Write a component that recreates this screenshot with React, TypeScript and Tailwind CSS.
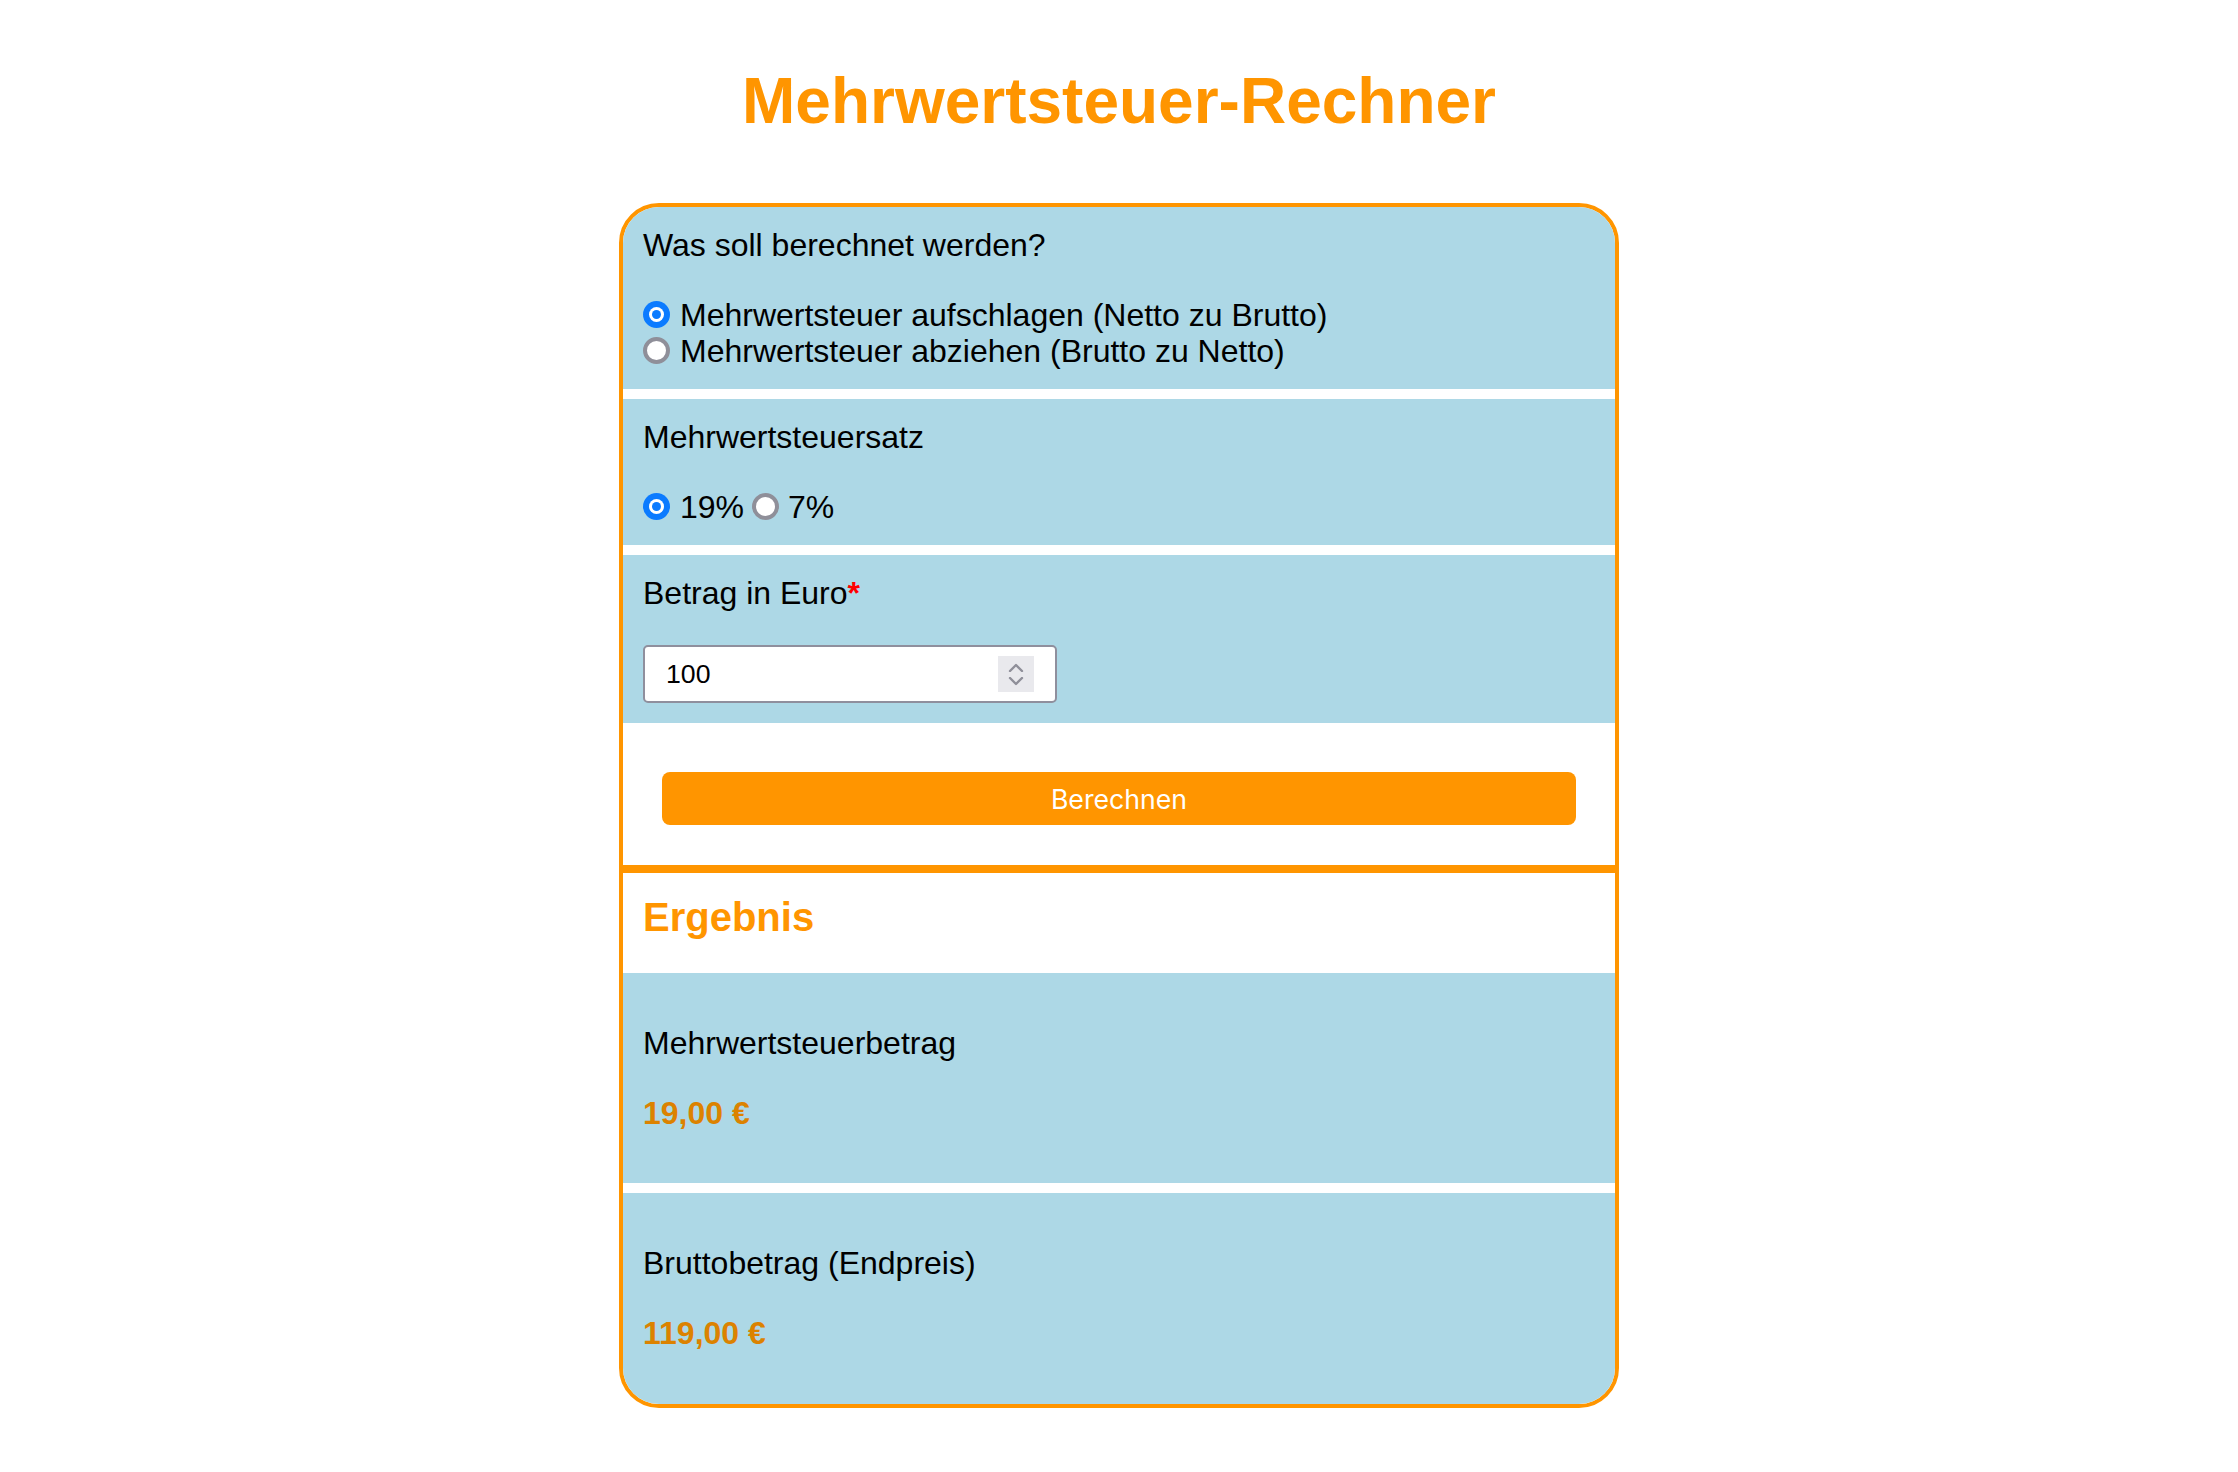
import React from "react";

const font = { fontFamily: '"Liberation Sans", Arial, sans-serif' };

function Radio({ checked }: { checked?: boolean }) {
  if (checked) {
    return (
      <span className="flex h-[27px] w-[27px] shrink-0 items-center justify-center rounded-full bg-[#0b7bff]">
        <span className="flex h-[15px] w-[15px] items-center justify-center rounded-full bg-white">
          <span className="h-[9px] w-[9px] rounded-full bg-[#0b7bff]" />
        </span>
      </span>
    );
  }
  return <span className="h-[27px] w-[27px] shrink-0 rounded-full border-[4px] border-[#8f8f99] bg-white" />;
}

function Label({ children }: { children: React.ReactNode }) {
  return <div className="mb-[32px] text-[32px] leading-[37px] text-black">{children}</div>;
}

function Spinner() {
  return (
    <span className="flex h-[36px] w-[36px] shrink-0 flex-col items-center justify-center gap-[5px] bg-[#e9e9ed]">
      <svg width="16" height="9" viewBox="0 0 16 9" fill="none">
        <path d="M2 8 L8 2 L14 8" stroke="#8f8f99" strokeWidth="2.4" strokeLinecap="round" strokeLinejoin="round" />
      </svg>
      <svg width="16" height="9" viewBox="0 0 16 9" fill="none">
        <path d="M2 1 L8 7 L14 1" stroke="#8f8f99" strokeWidth="2.4" strokeLinecap="round" strokeLinejoin="round" />
      </svg>
    </span>
  );
}

export default function App() {
  return (
    <div className="min-h-screen bg-white" style={font}>
      <h1 className="mt-[69px] text-center text-[64px] font-bold leading-[64px] text-[#ff9500]">
        Mehrwertsteuer-Rechner
      </h1>

      <div className="mx-auto mt-[70px] w-[1000px] overflow-hidden rounded-[40px] border-4 border-[#ff9500] bg-white">
        {/* Berechnungsart */}
        <div className="bg-[#add8e6] px-[20px] pb-[21px] pt-[20px]">
          <Label>Was soll berechnet werden?</Label>
          <div className="flex h-[36px] items-center text-[32px] leading-[36px]">
            <Radio checked />
            <span className="ml-[10px] pt-[1px]">Mehrwertsteuer aufschlagen (Netto zu Brutto)</span>
          </div>
          <div className="flex h-[36px] items-center text-[32px] leading-[36px]">
            <Radio />
            <span className="ml-[10px] pt-[1px]">Mehrwertsteuer abziehen (Brutto zu Netto)</span>
          </div>
        </div>

        {/* Steuersatz */}
        <div className="mt-[10px] bg-[#add8e6] px-[20px] pb-[21px] pt-[20px]">
          <Label>Mehrwertsteuersatz</Label>
          <div className="flex h-[36px] items-center text-[32px] leading-[36px]">
            <Radio checked />
            <span className="ml-[10px] pt-[1px]">19%</span>
            <span className="ml-[8px]" />
            <Radio />
            <span className="ml-[9px] pt-[1px]">7%</span>
          </div>
        </div>

        {/* Betrag */}
        <div className="mt-[10px] bg-[#add8e6] px-[20px] pb-[20px] pt-[20px]">
          <div className="mb-[33px] text-[32px] leading-[37px]">
            Betrag in Euro<span className="font-bold text-[#ff0000]">*</span>
          </div>
          <div className="flex h-[58px] w-[414px] items-center rounded-[5px] border-2 border-[#8f8f9d] bg-white pl-[21px] pr-[21px]">
            <input
              className="min-w-0 flex-1 bg-transparent text-[26.67px] text-black outline-none"
              style={font}
              defaultValue="100"
            />
            <Spinner />
          </div>
        </div>

        {/* Button */}
        <div className="px-[39px] pb-[40px] pt-[49px]">
          <button
            className="flex h-[53px] w-full items-center justify-center rounded-[8px] bg-[#ff9500] text-[26.67px] text-white"
            style={{ fontFamily: 'Inter, "Noto Sans", sans-serif' }}
          >
            Berechnen
          </button>
        </div>

        <div className="h-[8px] bg-[#ff9500]" />

        {/* Ergebnis */}
        <div className="px-[20px] pb-[33px] pt-[21px]">
          <h2 className="text-[40px] font-bold leading-[46px] text-[#ff9500]">Ergebnis</h2>
        </div>

        <div className="bg-[#add8e6] px-[20px] pb-[51px] pt-[52px]">
          <div className="mb-[33px] text-[32px] leading-[37px]">Mehrwertsteuerbetrag</div>
          <div className="text-[32px] font-bold leading-[37px] text-[#dc8200]">19,00 €</div>
        </div>

        <div className="mt-[10px] bg-[#add8e6] px-[20px] pb-[52px] pt-[52px]">
          <div className="mb-[33px] text-[32px] leading-[37px]">Bruttobetrag (Endpreis)</div>
          <div className="text-[32px] font-bold leading-[37px] text-[#dc8200]">119,00 €</div>
        </div>
      </div>
    </div>
  );
}
